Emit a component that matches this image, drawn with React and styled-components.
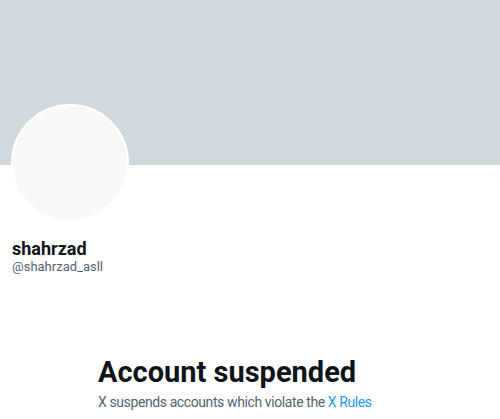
import React from 'react'
import styled, { createGlobalStyle } from 'styled-components'

const GlobalStyle = createGlobalStyle`
  html, body {
    margin: 0;
    padding: 0;
    background: #fff;
  }
  body {
    font-family: Roboto, "Noto Sans", "Liberation Sans", sans-serif;
    color: #0f1419;
  }
`

function App() {
  return (
    <Page>
      <GlobalStyle />
      <Banner />
      <Profile>
        <Avatar />
        <Name>shahrzad</Name>
        <Handle>@shahrzad_asll</Handle>
      </Profile>
      <EmptyState>
        <Title>Account suspended</Title>
        <Subtitle>
          X suspends accounts which violate the <RulesLink href="#">X Rules</RulesLink>
        </Subtitle>
      </EmptyState>
    </Page>
  )
}

export default App

const Page = styled.div`
  width: 500px;
  min-height: 419px;
  overflow: hidden;
`
const Banner = styled.div`
  height: 165px;
  background-color: #cfd9de;
`
const Profile = styled.div`
  padding: 0 12px;
  display: flex;
  flex-direction: column;
`
const Avatar = styled.div`
  width: 114px;
  height: 114px;
  margin-top: -61px;
  border-radius: 50%;
  background-color: #f7f9f9;
  border: 2px solid #fff;
  margin-left: -1px;
`
const Name = styled.div`
  margin-top: 18px;
  font-size: 18px;
  font-weight: 700;
  line-height: 18px;
  color: #0f1419;
`
const Handle = styled.div`
  font-size: 13px;
  line-height: 18px;
  color: #536471;
`
const EmptyState = styled.div`
  max-width: 304px;
  margin: 80px auto 0;
  padding: 0 16px;
`
const Title = styled.h2`
  margin: 0 0 4px;
  font-size: 29px;
  font-weight: 700;
  line-height: 32px;
  color: #0f1419;
  white-space: nowrap;
`
const Subtitle = styled.div`
  font-size: 14px;
  line-height: 20px;
  letter-spacing: -0.4px;
  color: #536471;
  white-space: nowrap;
`
const RulesLink = styled.a`
  color: #1d9bf0;
  text-decoration: none;
`
